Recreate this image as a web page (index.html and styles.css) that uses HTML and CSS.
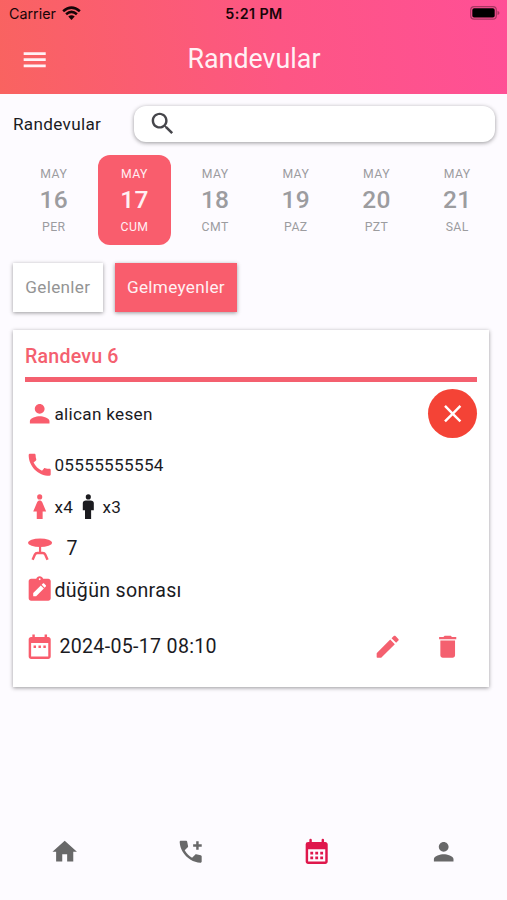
FILE: index.html
```html
<!DOCTYPE html>
<html lang="tr">
<head>
<meta charset="utf-8">
<meta name="viewport" content="width=device-width, initial-scale=1">
<title>Randevular</title>
<link rel="stylesheet" href="styles.css">
</head>
<body>
<header class="header">
  <div class="status">
    <div class="carrier"><span>Carrier</span>
      <svg class="wifi" viewBox="0 0 20 15" fill="none" stroke="#170508" stroke-width="2.7"><path d="M1.2 5.4Q10-2.2 18.8 5.4M4.3 8.6Q10 3.600 15.700 8.600"/><path d="M6.600 11Q10 8.200 13.400 11L10 14.600Z" fill="#170508" stroke="none"/></svg>
    </div>
    <span class="time">5:21 PM</span>
    <svg class="battery" viewBox="0 0 30 14"><rect x=".7" y=".7" width="25.6" height="12.4" rx="3.4" fill="none" stroke="#a83661" stroke-width="1.2"/><rect x="2.3" y="2.3" width="22.4" height="9.2" rx="1.8"/><path d="M27.5 4.7q2 .8 2 2.2t-2 2.2z" fill="#a83661"/></svg>
  </div>
  <div class="appbar">
    <svg class="icon menu" viewBox="0 0 24 24"><path d="M3 18.100h18v-2.200H3v2.200zm0-5h18v-2.200H3v2.200zm0-7.200v2.200h18V5.900H3z"/></svg>
    <h1>Randevular</h1>
  </div>
</header>
<main>
  <div class="searchrow">
    <span class="label">Randevular</span>
    <div class="search"><svg class="icon" viewBox="0 0 24 24"><path d="M15.5 14h-.79l-.28-.27C15.41 12.59 16 11.11 16 9.5 16 5.91 13.09 3 9.5 3S3 5.91 3 9.5 5.91 16 9.5 16c1.61 0 3.09-.59 4.23-1.57l.27.28v.79l5 4.99L20.49 19l-4.99-5zm-6 0C7.01 14 5 11.99 5 9.5S7.01 5 9.5 5 14 7.01 14 9.5 11.99 14 9.5 14z"/></svg></div>
  </div>
  <div class="days">
    <div class="day"><span>MAY</span><b>16</b><span>PER</span></div>
    <div class="day selected"><span>MAY</span><b>17</b><span>CUM</span></div>
    <div class="day"><span>MAY</span><b>18</b><span>CMT</span></div>
    <div class="day"><span>MAY</span><b>19</b><span>PAZ</span></div>
    <div class="day"><span>MAY</span><b>20</b><span>PZT</span></div>
    <div class="day"><span>MAY</span><b>21</b><span>SAL</span></div>
  </div>
  <div class="filters">
    <div class="filter came">Gelenler</div>
    <div class="filter active">Gelmeyenler</div>
  </div>
  <section class="card">
    <h2>Randevu 6</h2>
    <div class="rule"></div>
    <div class="row person">
      <svg class="icon" viewBox="0 0 24 24"><path d="M12 12c2.21 0 4-1.79 4-4s-1.79-4-4-4-4 1.79-4 4 1.79 4 4 4zm0 2c-2.67 0-8 1.34-8 4v2h16v-2c0-2.66-5.33-4-8-4z"/></svg>
      <span>alican kesen</span>
      <div class="close"><svg class="icon" viewBox="0 0 24 24"><path d="M19 6.41 17.59 5 12 10.59 6.41 5 5 6.41 10.59 12 5 17.59 6.41 19 12 13.41 17.59 19 19 17.59 13.41 12z"/></svg></div>
    </div>
    <div class="row">
      <svg class="icon" viewBox="0 0 24 24"><path d="M20.01 15.38c-1.23 0-2.42-.2-3.53-.56-.35-.12-.74-.03-1.01.24l-1.57 1.97c-2.83-1.35-5.48-3.9-6.89-6.83l1.95-1.66c.27-.28.35-.67.24-1.02-.37-1.11-.56-2.3-.56-3.53 0-.54-.45-.99-.99-.99H4.19C3.65 3 3 3.24 3 3.99 3 13.28 10.73 21 20.01 21c.71 0 .99-.63.99-1.18v-3.45c0-.54-.45-.99-.99-.99z"/></svg>
      <span class="phone">05555555554</span>
    </div>
    <div class="row">
      <svg class="icon" viewBox="0 0 24 24"><path d="M14.100 8.310C13.700 7.520 12.850 7 12 7s-1.700.52-2.100 1.310L6.700 16h2.900v6h4.800v-6h2.900l-3.200-7.690z"/><circle cx="12" cy="4" r="2.100"/></svg>
      <span class="count">x4</span>
      <svg class="icon man" viewBox="0 0 24 24"><path d="M14.500 7h-4c-1.400 0-2.500.9-2.500 2v6h1.800v7h5v-7H17V9c0-1.100-1.100-2-2.500-2z"/><circle cx="12.500" cy="4" r="2.100"/></svg>
      <span class="count">x3</span>
    </div>
    <div class="row">
      <svg class="icon" viewBox="0 0 24 24"><ellipse cx="12.300" cy="7.200" rx="9.800" ry="3.500"/><path d="M11.400 10.200h1.800v5h-1.800z"/><path d="M6.200 21l1.900-4.200q.6-1.300 2-1.300h4.400q1.400 0 2 1.300L18.400 21" fill="none" stroke="currentColor" stroke-width="2"/></svg>
      <span class="table large">7</span>
    </div>
    <div class="row">
      <svg class="icon" viewBox="0 0 24 24"><path fill-rule="evenodd" d="M19 3h-4.180C14.400 1.840 13.300 1 12 1s-2.400.84-2.820 2H5c-1.100 0-2 .9-2 2v14c0 1.100.9 2 2 2h14c1.100 0 2-.9 2-2V5c0-1.100-.9-2-2-2zM12 2.750c.41 0 .75.34.75.75s-.34.75-.75.75-.75-.34-.75-.75.34-.75.75-.75zM9.100 17.300H6.700v-2.500l6.200-6.200 2.500 2.500L9.100 17.300zm7.900-7.900-1 1-2.400-2.400 1-1c.3-.3.700-.3 1 0l1.400 1.400c.3.300.3.700 0 1z"/></svg>
      <span class="large note">düğün sonrası</span>
    </div>
    <div class="row last">
      <svg class="icon" viewBox="0 0 24 24"><path d="M9 11H7v2h2v-2zm4 0h-2v2h2v-2zm4 0h-2v2h2v-2zm2-7h-1V2h-2v2H8V2H6v2H5c-1.110 0-1.990.9-1.990 2L3 20c0 1.100.89 2 2 2h14c1.100 0 2-.9 2-2V6c0-1.100-.9-2-2-2zm0 16H5V9h14v11z"/></svg>
      <span class="date large">2024-05-17 08:10</span>
      <div class="actions">
        <svg class="icon" viewBox="0 0 24 24"><path d="M3 17.460v3.040c0 .28.22.5.5.5h3.040c.13 0 .26-.05.35-.15L17.810 9.940l-3.750-3.750L3.150 17.100c-.1.100-.15.220-.15.360zM20.710 7.040c.39-.39.39-1.020 0-1.410l-2.340-2.340c-.39-.39-1.020-.39-1.410 0l-1.830 1.830 3.750 3.750 1.830-1.830z"/></svg>
        <svg class="icon" viewBox="0 0 24 24"><path d="M6 19c0 1.100.9 2 2 2h8c1.100 0 2-.9 2-2V7H6zM19 4h-3.500l-1-1h-5l-1 1H5v2h14z"/></svg>
      </div>
    </div>
  </section>
</main>
<nav class="bottom">
  <svg class="icon" viewBox="0 0 24 24"><path d="M10 20v-6h4v6h5v-8h3L12 3 2 12h3v8z"/></svg>
  <svg class="icon" viewBox="0 0 24 24"><path d="m15.630 14.400-2.520 2.500c-2.500-1.430-4.570-3.500-6-6l2.500-2.520c.23-.24.330-.57.270-.9L9.130 3.800c-.09-.46-.5-.8-.98-.8H4c-.56 0-1.030.47-1 1.030.17 2.910 1.040 5.630 2.430 8.010 1.570 2.690 3.810 4.930 6.500 6.500 2.380 1.390 5.100 2.260 8.010 2.430.56.030 1.030-.44 1.030-1v-4.150c0-.48-.34-.89-.8-.98l-3.670-.73c-.33-.06-.66.040-.87.290zM14 8h2.500v2.500h2V8H21V6h-2.500V3.500h-2V6H14z"/></svg>
  <svg class="icon current" viewBox="0 0 24 24"><path fill-rule="evenodd" d="M19 4h-1V2.500a1 1 0 0 0-2 0V4H8V2.500a1 1 0 0 0-2 0V4H5a2 2 0 0 0-2 2v14c0 1.100.9 2 2 2h14c1.100 0 2-.9 2-2V6c0-1.100-.9-2-2-2zM19 20H5V10h14zM6.800 12h2.300v2.200H6.800zM10.850 12h2.300v2.200h-2.300zM14.900 12h2.300v2.200h-2.300zM6.800 16h2.300v2.200H6.800zM10.850 16h2.300v2.200h-2.300zM14.900 16h2.300v2.200h-2.300z"/></svg>
  <svg class="icon" viewBox="0 0 24 24"><path d="M12 12c2.210 0 4-1.790 4-4s-1.790-4-4-4-4 1.790-4 4 1.790 4 4 4zm0 2c-2.670 0-8 1.340-8 4v2h16v-2c0-2.660-5.330-4-8-4z"/></svg>
</nav>
</body>
</html>
```
FILE: styles.css
```css
* { box-sizing: border-box; }
body {
  margin: 0;
  height: 900px;
  display: flex;
  flex-direction: column;
  overflow: hidden;
  background: #fdfbff;
  color: #1b1b1f;
  font-family: Roboto, "Liberation Sans", sans-serif;
  font-size: 17.15px;
  letter-spacing: .31px;
}
.icon { width: 29.4px; height: 29.4px; flex: none; fill: currentColor; display: block; }
.header { height: 93.5px; flex: none; background: linear-gradient(82deg, #f96360 0%, #fd5684 55%, #ff4f96 100%); }
.status {
  height: 27px;
  display: grid;
  grid-template-columns: 1fr auto 1fr;
  align-items: center;
  padding: 0 7px 0 9px;
  font: 14.3px/27px Inter, sans-serif;
  letter-spacing: 0;
  color: #170508;
}
.carrier { display: flex; align-items: center; gap: 6px; }
.wifi { width: 19px; height: 14.5px; margin-top: -1px; }
.time { font-weight: 600; letter-spacing: .4px; padding-right: 1px; }
.battery { width: 30px; height: 14px; justify-self: end; margin-top: -1px; }
.appbar {
  height: 66.5px;
  display: grid;
  grid-template-columns: 70px 1fr 70px;
  align-items: center;
  color: #fff1f5;
  padding-bottom: 1px;
}
.menu { justify-self: center; }
h1 { margin: 0 0 1px 1px; text-align: center; font-size: 26.8px; font-weight: 400; line-height: 36px; letter-spacing: 0; }
main { flex: 1; }
.searchrow { display: flex; align-items: center; height: 37px; margin: 12px 12px 0 13px; }
.label { width: 121px; flex: none; }
.search {
  flex: 1;
  height: 36px;
  display: flex;
  align-items: center;
  padding-left: 13.5px;
  border-radius: 12px;
  background: #fff;
  color: #46464b;
  box-shadow: 0 1px 4px rgba(0,0,0,.4);
}
.days { display: flex; gap: 7.2px; margin: 12px 0 0 17px; }
.day {
  width: 73.5px;
  height: 90px;
  flex: none;
  display: flex;
  flex-direction: column;
  align-items: center;
  justify-content: space-between;
  padding: 11px 0 9px;
  border-radius: 12px;
  color: #9c9c9f;
  font-size: 12.25px;
  line-height: 17px;
  letter-spacing: .4px;
}
.day b { font-size: 24.5px; font-weight: 500; line-height: 30px; letter-spacing: .3px; padding-bottom: 1px; }
.selected { background: #f95d6d; color: #fff0f3; }
.filters { display: flex; gap: 12px; margin: 18px 0 0 13px; }
.filter {
  height: 49px;
  padding: 0 12.3px;
  line-height: 49px;
  background: #fff;
  color: #949494;
  box-shadow: 0 1px 4px rgba(0,0,0,.4);
}
.filter.active { background: #f95d6d; color: #fff0f3; }
.card {
  width: 476px;
  height: 357.5px;
  margin: 18px 0 0 13px;
  padding: 12px;
  background: #fff;
  box-shadow: 0 1px 4px rgba(0,0,0,.4);
}
h2 { margin: 0; height: 35.5px; font-size: 19.6px; line-height: 29px; font-weight: 500; letter-spacing: .2px; color: #f4606f; }
.rule { height: 5px; margin-bottom: 7.2px; background: #f4606f; }
.row { display: flex; align-items: center; height: 29.4px; margin-bottom: 12.25px; }
.row > .icon { color: #f95d6d; }
.row > .man { color: #1b1b1f; }
.person { height: 49px; }
.close {
  width: 49px;
  height: 49px;
  margin-left: auto;
  display: grid;
  place-items: center;
  border-radius: 50%;
  background: #f44336;
  color: #fff;
}
.large { font-size: 19.6px; }
.table { margin-left: 12px; }
.date { margin-left: 5px; }
.last { height: 58.8px; margin: 0; }
.actions { display: flex; gap: 30px; margin-left: auto; padding-right: 15px; color: #f4606f; }
.bottom {
  height: 97px;
  flex: none;
  display: grid;
  grid-template-columns: repeat(4, 126.4px);
  justify-items: center;
  align-items: center;
  padding-left: 1px;
  color: #686869;
}
.current { color: #df174c; }
```
